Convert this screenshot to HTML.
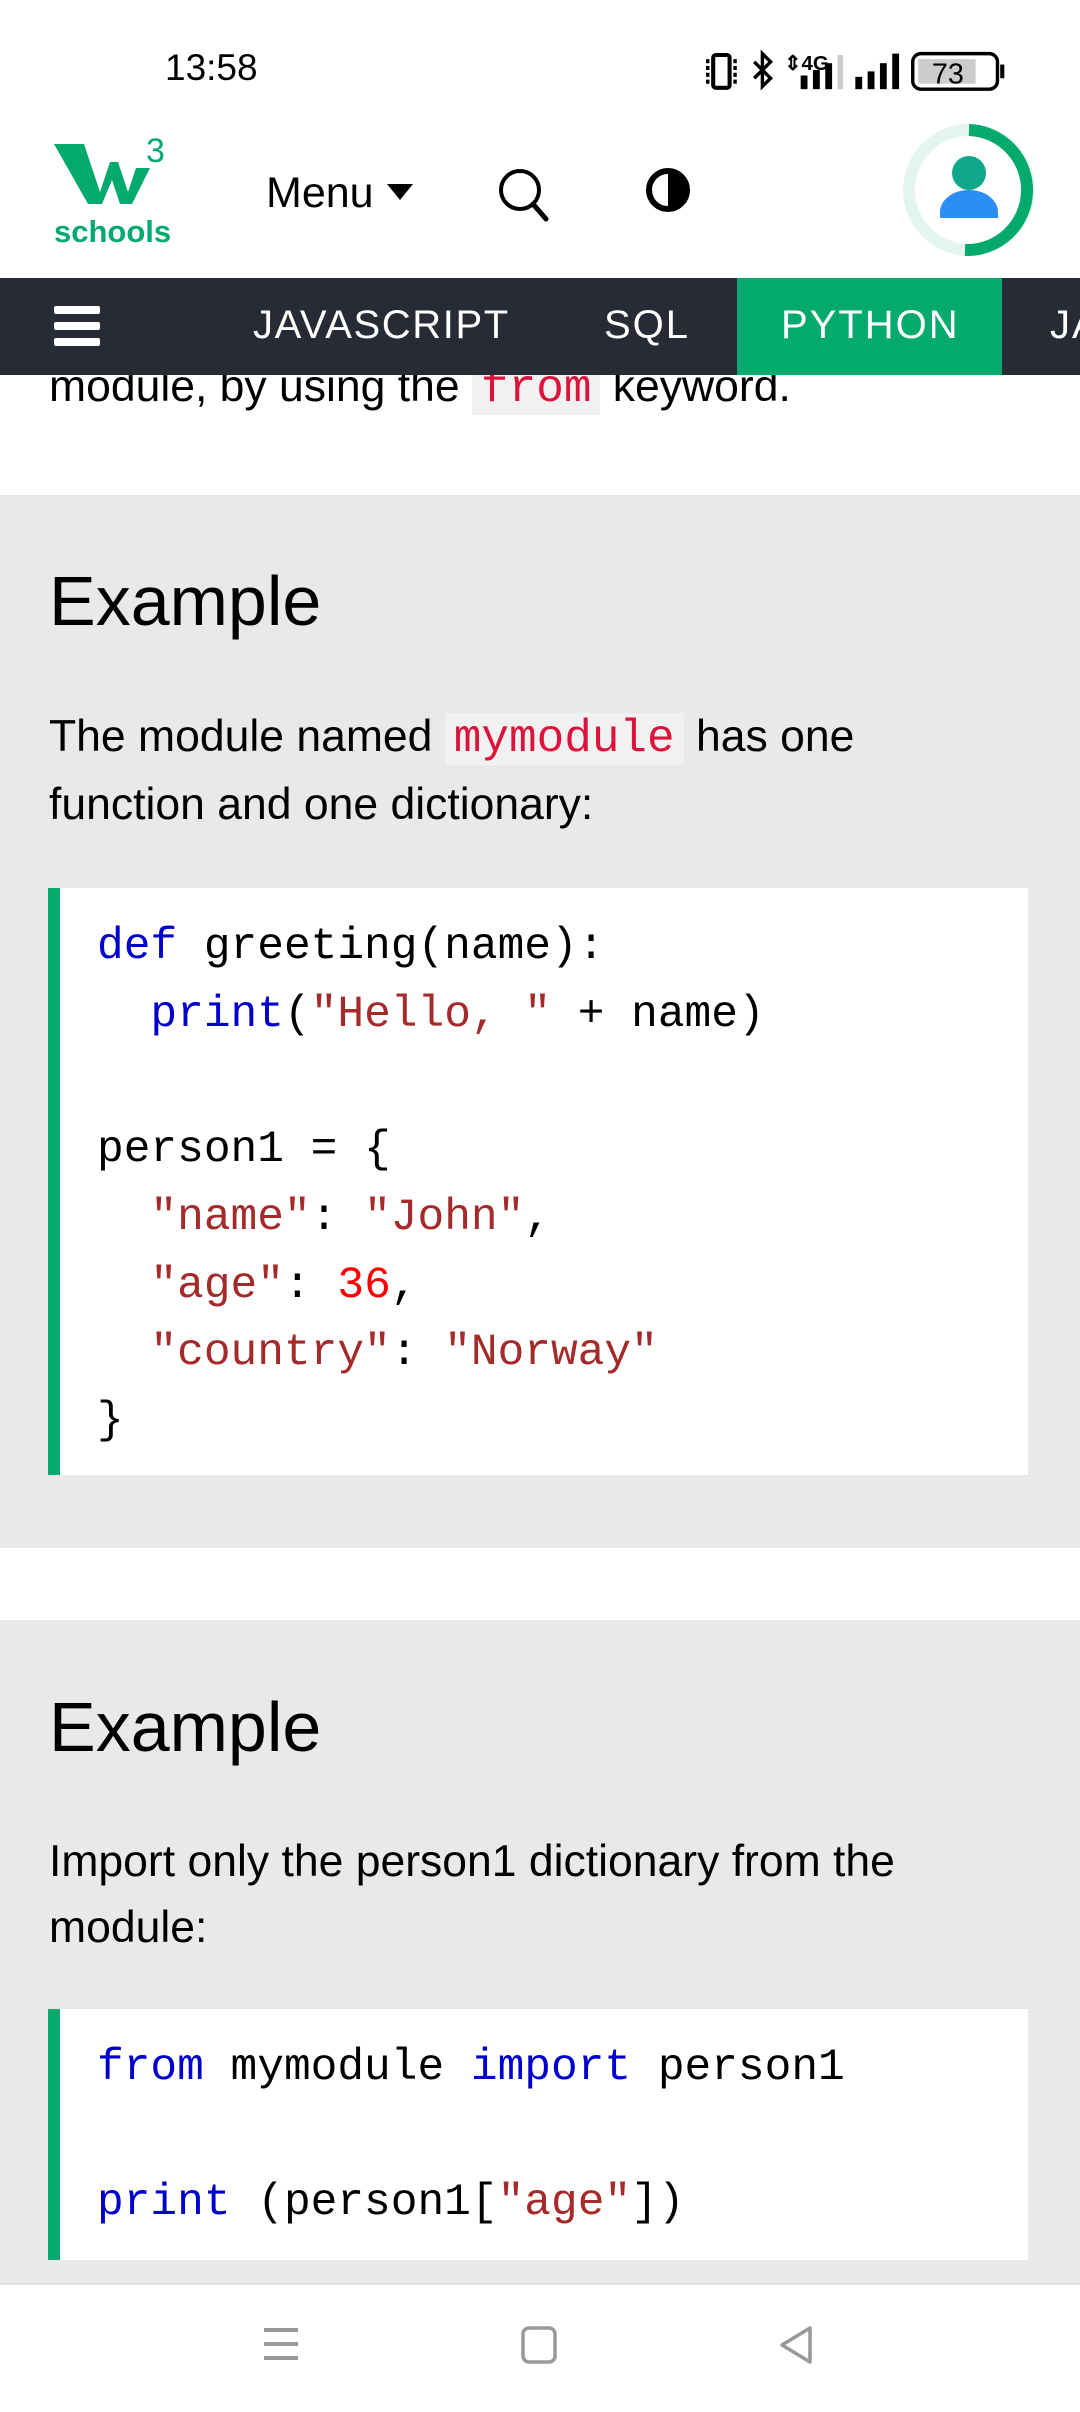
<!DOCTYPE html>
<html><head><meta charset="utf-8">
<style>
*{margin:0;padding:0;box-sizing:border-box}
html,body{width:1080px;height:2412px;overflow:hidden;background:#fff;font-family:"Liberation Sans",sans-serif;color:#000}
.abs{position:absolute}
.sec{position:absolute;left:0;width:1080px;background:#e7e9eb}
.h{position:absolute;left:49px;font-size:70px;line-height:80px}
.p{position:absolute;left:49px;font-size:44.5px;line-height:68px;white-space:nowrap}
.ic{font-family:"Liberation Mono",monospace;color:#dc143c;background:#f1f1f1;padding:0 9px;font-size:46px}
.code{position:absolute;left:48px;width:980px;background:#fff;border-left:12px solid #04aa6d;font-family:"Liberation Mono",monospace;font-size:44.5px;line-height:67.7px;white-space:pre;padding-left:37px}
.k{color:#0000cd}.s{color:#a52a2a}.n{color:#ff0000}
</style></head><body>
<!-- status bar -->
<div class="abs" style="left:165px;top:46px;font-size:37px;line-height:44px">13:58</div>
<svg class="abs" style="left:705px;top:48px" width="410" height="55" viewBox="0 0 300 40">
 <rect x="6" y="5" width="12" height="24" rx="2" fill="none" stroke="#000" stroke-width="3"/>
 <path d="M2 8v18M22 8v18" stroke="#000" stroke-width="2.5" stroke-dasharray="3 2"/>
 <path d="M36 10l12 12-6 6V4l6 6-12 12" fill="none" stroke="#000" stroke-width="2.5"/>
 <text x="58" y="16" font-size="15" font-weight="bold" font-family="Liberation Sans">⇕4G</text>
 <rect x="70" y="20" width="5" height="10" fill="#000"/><rect x="79" y="16" width="5" height="14" fill="#000"/><rect x="88" y="11" width="5" height="19" fill="#000"/><rect x="97" y="5" width="4" height="25" fill="#ccc"/>
 <rect x="110" y="21" width="5" height="9" fill="#000"/><rect x="119" y="17" width="5" height="13" fill="#000"/><rect x="128" y="11" width="5" height="19" fill="#000"/><rect x="137" y="4" width="5" height="26" fill="#000"/>
 <rect x="152" y="4" width="62" height="26" rx="6" fill="none" stroke="#000" stroke-width="2.5"/>
 <rect x="156" y="8" width="42" height="18" fill="#ccc"/>
 <text x="166" y="26" font-size="21" font-family="Liberation Sans">73</text>
 <rect x="216" y="12" width="3" height="10" fill="#000"/>
</svg>
<!-- header -->
<svg class="abs" style="left:50px;top:130px" width="125" height="120" viewBox="0 0 125 120">
 <path d="M4 14h30l16 48 10-30 8 0 10 30 8-24h14l-18 36h-12l-8-24-10 24h-14z" fill="#04aa6d"/>
 <text x="96" y="32" font-size="34" fill="#04aa6d" font-family="Liberation Sans">3</text>
 <text x="4" y="112" font-size="31" font-weight="bold" fill="#04aa6d" font-family="Liberation Sans">schools</text>
</svg>
<div class="abs" style="left:266px;top:168px;font-size:43px;line-height:50px">Menu</div>
<svg class="abs" style="left:385px;top:180px" width="30" height="24"><path d="M2 4h26L15 20z" fill="#000"/></svg>
<svg class="abs" style="left:495px;top:165px" width="60" height="60" viewBox="0 0 60 60"><circle cx="25" cy="25" r="19" fill="none" stroke="#000" stroke-width="4"/><path d="M38 39l13 15" stroke="#000" stroke-width="5" stroke-linecap="round"/></svg>
<svg class="abs" style="left:644px;top:166px" width="50" height="50" viewBox="0 0 50 50"><circle cx="24" cy="24" r="19" fill="#fff" stroke="#000" stroke-width="6"/><path d="M24 5a19 19 0 0 1 0 38z" fill="#000"/></svg>
<svg class="abs" style="left:895px;top:116px" width="150" height="150" viewBox="0 0 150 150">
 <circle cx="74" cy="74" r="60" fill="none" stroke="#e3f5ee" stroke-width="12"/>
 <path d="M74 14a60 60 0 0 1 -4 120" fill="none" stroke="#04aa6d" stroke-width="12"/>
 <circle cx="74" cy="57" r="17" fill="#0fa88a"/>
 <path d="M45 102v-6a29 22 0 0 1 58 0v6z" fill="#2b8ef6"/>
</svg>
<!-- content part -->
<div class="p" style="top:353px">module, by using the <span class="ic">from</span> keyword.</div>
<!-- topnav -->
<div class="abs" style="left:0;top:278px;width:1080px;height:97px;background:#282a35;color:#fff;font-size:40px;letter-spacing:2px">
 <div class="abs" style="left:54px;top:28px;width:46px;height:8px;background:#fff;border-radius:2px"></div>
 <div class="abs" style="left:54px;top:44px;width:46px;height:8px;background:#fff;border-radius:2px"></div>
 <div class="abs" style="left:54px;top:60px;width:46px;height:8px;background:#fff;border-radius:2px"></div>
 <div class="abs" style="left:253px;top:25px;letter-spacing:1.6px">JAVASCRIPT</div>
 <div class="abs" style="left:604px;top:25px">SQL</div>
 <div class="abs" style="left:737px;top:0;width:265px;height:97px;background:#04aa6d"></div>
 <div class="abs" style="left:781px;top:25px">PYTHON</div>
 <div class="abs" style="left:1050px;top:25px">JA</div>
</div>
<!-- example 1 -->
<div class="sec" style="top:495px;height:1053px">
 <div class="h" style="top:66px">Example</div>
 <div class="p" style="top:208px">The module named <span class="ic">mymodule</span> has one</div>
 <div class="p" style="top:276px">function and one dictionary:</div>
 <div class="code" style="top:393px;height:587px;padding-top:26px"><span class="k">def</span> greeting(name):
  <span class="k">print</span>(<span class="s">"Hello, "</span> + name)

person1 = {
  <span class="s">"name"</span>: <span class="s">"John"</span>,
  <span class="s">"age"</span>: <span class="n">36</span>,
  <span class="s">"country"</span>: <span class="s">"Norway"</span>
}</div>
</div>
<!-- example 2 -->
<div class="sec" style="top:1620px;height:663px">
 <div class="h" style="top:67px">Example</div>
 <div class="p" style="top:208px">Import only the person1 dictionary from the</div>
 <div class="p" style="top:274px">module:</div>
 <div class="code" style="top:389px;height:251px;padding-top:26px"><span class="k">from</span> mymodule <span class="k">import</span> person1

<span class="k">print</span> (person1[<span class="s">"age"</span>])</div>
</div>
<!-- bottom nav -->
<div class="abs" style="left:0;top:2283px;width:1080px;height:129px;background:#fff;border-top:2px solid #e0e0e0">
 <svg class="abs" style="left:262px;top:40px" width="40" height="40"><path d="M2 5h34M2 19h34M2 33h34" stroke="#999" stroke-width="4"/></svg>
 <svg class="abs" style="left:520px;top:40px" width="40" height="40"><rect x="3" y="3" width="32" height="34" rx="6" fill="none" stroke="#999" stroke-width="3.5"/></svg>
 <svg class="abs" style="left:777px;top:40px" width="40" height="40"><path d="M33 3L5 20l28 17z" fill="none" stroke="#999" stroke-width="3.5" stroke-linejoin="round"/></svg>
</div>
</body></html>
